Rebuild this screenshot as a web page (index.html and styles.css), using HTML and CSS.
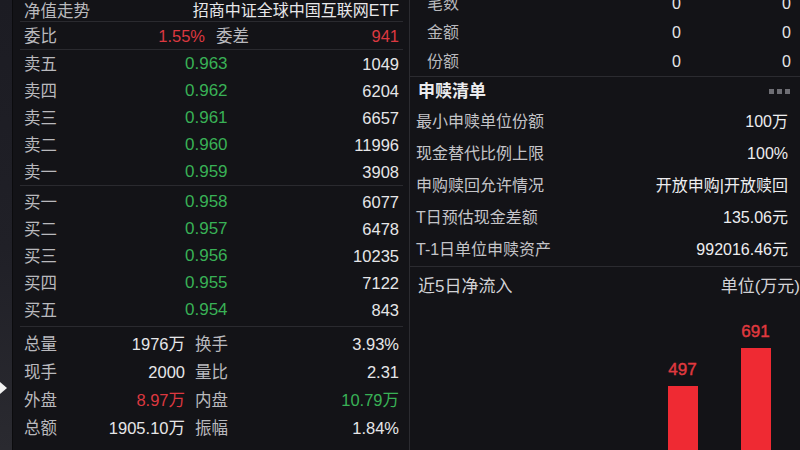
FILE: index.html
```html
<!DOCTYPE html>
<html lang="zh-CN">
<head>
<meta charset="utf-8">
<title>招商中证全球中国互联网ETF</title>
<link rel="stylesheet" href="styles.css">
</head>
<body>
<div class="screen">
  <aside class="rail"><span class="handle"></span></aside>

  <section class="quote">
    <div class="head"><span class="lbl">净值走势</span><span class="fund">招商中证全球中国互联网ETF</span></div>
    <div class="ratio">
      <div class="pair"><span class="lbl">委比</span><span class="red">1.55%</span></div>
      <div class="pair"><span class="lbl">委差</span><span class="red">941</span></div>
    </div>
    <div class="book">
      <div class="row"><span class="lbl">卖五</span><span class="green">0.963</span><span class="num">1049</span></div>
      <div class="row"><span class="lbl">卖四</span><span class="green">0.962</span><span class="num">6204</span></div>
      <div class="row"><span class="lbl">卖三</span><span class="green">0.961</span><span class="num">6657</span></div>
      <div class="row"><span class="lbl">卖二</span><span class="green">0.960</span><span class="num">11996</span></div>
      <div class="row"><span class="lbl">卖一</span><span class="green">0.959</span><span class="num">3908</span></div>
    </div>
    <div class="book buy">
      <div class="row"><span class="lbl">买一</span><span class="green">0.958</span><span class="num">6077</span></div>
      <div class="row"><span class="lbl">买二</span><span class="green">0.957</span><span class="num">6478</span></div>
      <div class="row"><span class="lbl">买三</span><span class="green">0.956</span><span class="num">10235</span></div>
      <div class="row"><span class="lbl">买四</span><span class="green">0.955</span><span class="num">7122</span></div>
      <div class="row"><span class="lbl">买五</span><span class="green">0.954</span><span class="num">843</span></div>
    </div>
    <div class="stats">
      <div class="srow">
        <div class="pair"><span class="lbl">总量</span><span class="num">1976万</span></div>
        <div class="pair"><span class="lbl">换手</span><span class="num">3.93%</span></div>
      </div>
      <div class="srow">
        <div class="pair"><span class="lbl">现手</span><span class="num">2000</span></div>
        <div class="pair"><span class="lbl">量比</span><span class="num">2.31</span></div>
      </div>
      <div class="srow">
        <div class="pair"><span class="lbl">外盘</span><span class="red">8.97万</span></div>
        <div class="pair"><span class="lbl">内盘</span><span class="green">10.79万</span></div>
      </div>
      <div class="srow">
        <div class="pair"><span class="lbl">总额</span><span class="num">1905.10万</span></div>
        <div class="pair"><span class="lbl">振幅</span><span class="num">1.84%</span></div>
      </div>
    </div>
  </section>

  <section class="side">
    <div class="flow">
      <div class="frow"><span class="lbl">笔数</span><span class="num">0</span><span class="num">0</span></div>
      <div class="frow"><span class="lbl">金额</span><span class="num">0</span><span class="num">0</span></div>
      <div class="frow"><span class="lbl">份额</span><span class="num">0</span><span class="num">0</span></div>
    </div>
    <div class="list">
      <div class="lhead"><span>申赎清单</span><span class="dots"><i></i><i></i><i></i></span></div>
      <div class="lrow"><span class="lbl">最小申赎单位份额</span><span class="val">100万</span></div>
      <div class="lrow"><span class="lbl">现金替代比例上限</span><span class="val">100%</span></div>
      <div class="lrow"><span class="lbl">申购赎回允许情况</span><span class="val">开放申购|开放赎回</span></div>
      <div class="lrow"><span class="lbl">T日预估现金差额</span><span class="val">135.06元</span></div>
      <div class="lrow"><span class="lbl">T-1日单位申赎资产</span><span class="val">992016.46元</span></div>
    </div>
    <div class="chart">
      <div class="ctitle"><span>近5日净流入</span><span>单位(万元)</span></div>
      <div class="bars">
        <div class="col"></div>
        <div class="col"></div>
        <div class="col"></div>
        <div class="col"><span class="blabel">497</span><span class="bar" style="height:98px"></span></div>
        <div class="col"><span class="blabel">691</span><span class="bar" style="height:136px"></span></div>
      </div>
    </div>
  </section>
</div>
</body>
</html>
```

FILE: styles.css
```css
html, body {
  margin: 0;
  padding: 0;
}
body {
  width: 800px;
  height: 450px;
  overflow: hidden;
  background: #131317;
  font-family: "Liberation Sans", "Noto Sans CJK SC", sans-serif;
  color: #e4e4e6;
}
.screen {
  display: flex;
  height: 450px;
}
.rail {
  width: 12px;
  flex: none;
  border-right: 1px solid #0b0b0d;
  background: linear-gradient(#1c1c23, #202027 55%, #2a2a30);
  position: relative;
}
.handle {
  position: absolute;
  left: 0;
  top: 382px;
  width: 0;
  height: 0;
  border-left: 7px solid #f2f2f2;
  border-top: 6px solid transparent;
  border-bottom: 6px solid transparent;
}
.lbl { color: #b9b9bd; }
.num { color: #e6e6e8; }
.green { color: #39b156; }
.red { color: #dc3840; }

/* left quote panel */
.quote {
  width: 396px;
  flex: none;
  font-size: 16.5px;
  line-height: 20px;
}
.head, .ratio, .book, .stats {
  margin: 0 6px 0 7px;
  padding: 0 4px;
}
.head {
  height: 21px;
  border-bottom: 1px solid #2a2a2f;
  display: flex;
  justify-content: space-between;
  align-items: center;
}
.fund {
  font-size: 16px;
  color: #e8e8ea;
}
.ratio {
  height: 27px;
  border-bottom: 1px solid #2a2a2f;
  display: grid;
  grid-template-columns: 181px 1fr;
  column-gap: 11px;
  align-items: center;
}
.pair {
  display: flex;
  justify-content: space-between;
  align-items: center;
}
.book {
  border-bottom: 1px solid #2a2a2f;
}
.book.buy {
  padding-top: 2px;
  padding-bottom: 3px;
}
.row {
  height: 27px;
  display: grid;
  grid-template-columns: 161px 1fr auto;
  align-items: center;
}
.row .green {
  font-size: 17px;
}
.stats {
  padding-top: 3px;
}
.srow {
  height: 28px;
  display: grid;
  grid-template-columns: 161px 1fr;
  column-gap: 10px;
  align-items: center;
}

/* right panel */
.side {
  flex: 1;
  border-left: 1px solid #2b2b30;
  font-size: 16px;
  line-height: 20px;
}
.flow {
  margin-top: -11px;
  padding: 0 9px 0 17px;
  border-bottom: 1px solid #2b2b30;
}
.frow {
  height: 29px;
  display: grid;
  grid-template-columns: 1fr 110px 110px;
  align-items: center;
}
.frow .num { text-align: right; }
.list {
  border-bottom: 1px solid #2b2b30;
}
.lhead {
  height: 29px;
  padding: 0 10px 0 8px;
  display: flex;
  justify-content: space-between;
  align-items: center;
  font-size: 17px;
  font-weight: bold;
  color: #ececee;
}
.dots {
  display: flex;
  gap: 3px;
}
.dots i {
  width: 5px;
  height: 5px;
  background: #6e6e74;
}
.lrow {
  height: 32px;
  padding: 0 12px 0 6px;
  display: flex;
  justify-content: space-between;
  align-items: center;
}
.lrow .lbl { color: #c4c4c8; }
.val { color: #ededef; }
.ctitle {
  height: 40px;
  padding-left: 8px;
  display: flex;
  justify-content: space-between;
  align-items: center;
  font-size: 17px;
  color: #d2d2d6;
}
.bars {
  height: 177px;
  display: grid;
  grid-template-columns: repeat(5, 73px);
  justify-content: end;
  padding-right: 8px;
}
.col {
  display: flex;
  flex-direction: column;
  justify-content: flex-end;
  align-items: center;
}
.blabel {
  color: #e0393f;
  font-size: 17px;
  line-height: 20px;
  margin-bottom: 6px;
  -webkit-text-stroke: 0.4px #e0393f;
}
.bar {
  width: 30px;
  background: #ef2a33;
}
```
